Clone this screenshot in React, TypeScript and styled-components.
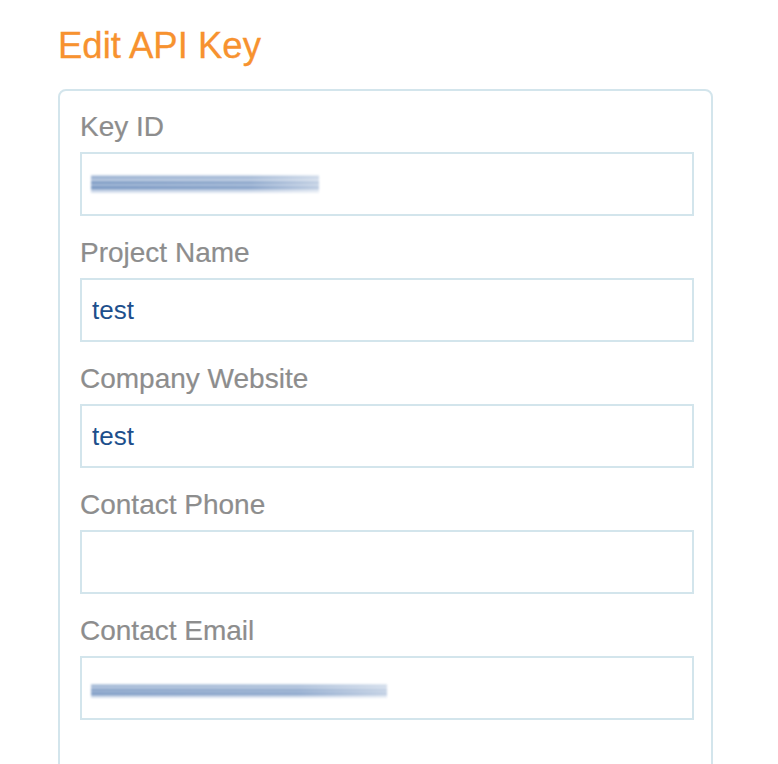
import styled, { createGlobalStyle } from "styled-components";

const GlobalStyle = createGlobalStyle`
  html, body {
    margin: 0;
    padding: 0;
    background: #ffffff;
    overflow: hidden;
  }
  body {
    font-family: "Liberation Sans", Arial, Helvetica, sans-serif;
  }
`;

const Page = styled.div`
  padding: 28px 0 0 58px;
  width: 655px;
`;

const Title = styled.h1`
  margin: 0 0 25px 0;
  font-size: 36.5px;
  line-height: 36px;
  font-weight: 400;
  color: #f7922f;
  -webkit-text-stroke: 0.3px #f7922f;
`;

const Panel = styled.div`
  box-sizing: border-box;
  width: 655px;
  border: 2px solid #d3e5ec;
  border-radius: 8px;
  padding: 20px 17px 80px 20px;
`;

const Field = styled.div`
  display: flex;
  flex-direction: column;
  margin-bottom: 21px;
`;

const Label = styled.label`
  font-size: 28px;
  line-height: 32px;
  color: #8d8d8d;
  margin-bottom: 9px;
  -webkit-text-stroke: 0.2px #8d8d8d;
`;

const Input = styled.div`
  box-sizing: border-box;
  height: 64px;
  border: 2px solid #d3e5ec;
  padding: 0 10px;
  display: flex;
  align-items: center;
  font-size: 26px;
  color: #1d4f8c;
`;

const Redacted = styled.span<{ $w: number; $h: number; $dy: number }>`
  display: block;
  width: ${(p) => p.$w}px;
  height: ${(p) => p.$h}px;
  margin: ${(p) => p.$dy * 2}px 0 0 -1px;
  background:
    linear-gradient(90deg, rgba(255,255,255,0) 0%, rgba(255,255,255,0.1) 70%, rgba(255,255,255,0.5) 100%),
    linear-gradient(
      180deg,
      #dbe4ef 0%,
      #8ea8cc 14%,
      #c9d6e8 28%,
      #7393bf 42%,
      #afc2dd 56%,
      #6a8cbb 70%,
      #c3d1e5 85%,
      #e1e8f2 100%
    );
  filter: blur(0.8px);
`;

const fields: { label: string; value?: string; blur?: [number, number, number] }[] = [
  { label: "Key ID", blur: [228, 18, 0] },
  { label: "Project Name", value: "test" },
  { label: "Company Website", value: "test" },
  { label: "Contact Phone" },
  { label: "Contact Email", blur: [296, 14, 3] },
];

const App = () => {
  return (
    <Page>
      <GlobalStyle />
      <Title>Edit API Key</Title>
      <Panel>
        {fields.map((f, i) => (
          <Field key={i}>
            <Label>{f.label}</Label>
            <Input>
              {f.blur ? (
                <Redacted $w={f.blur[0]} $h={f.blur[1]} $dy={f.blur[2]} />
              ) : (
                f.value
              )}
            </Input>
          </Field>
        ))}
      </Panel>
    </Page>
  );
};

export default App;
